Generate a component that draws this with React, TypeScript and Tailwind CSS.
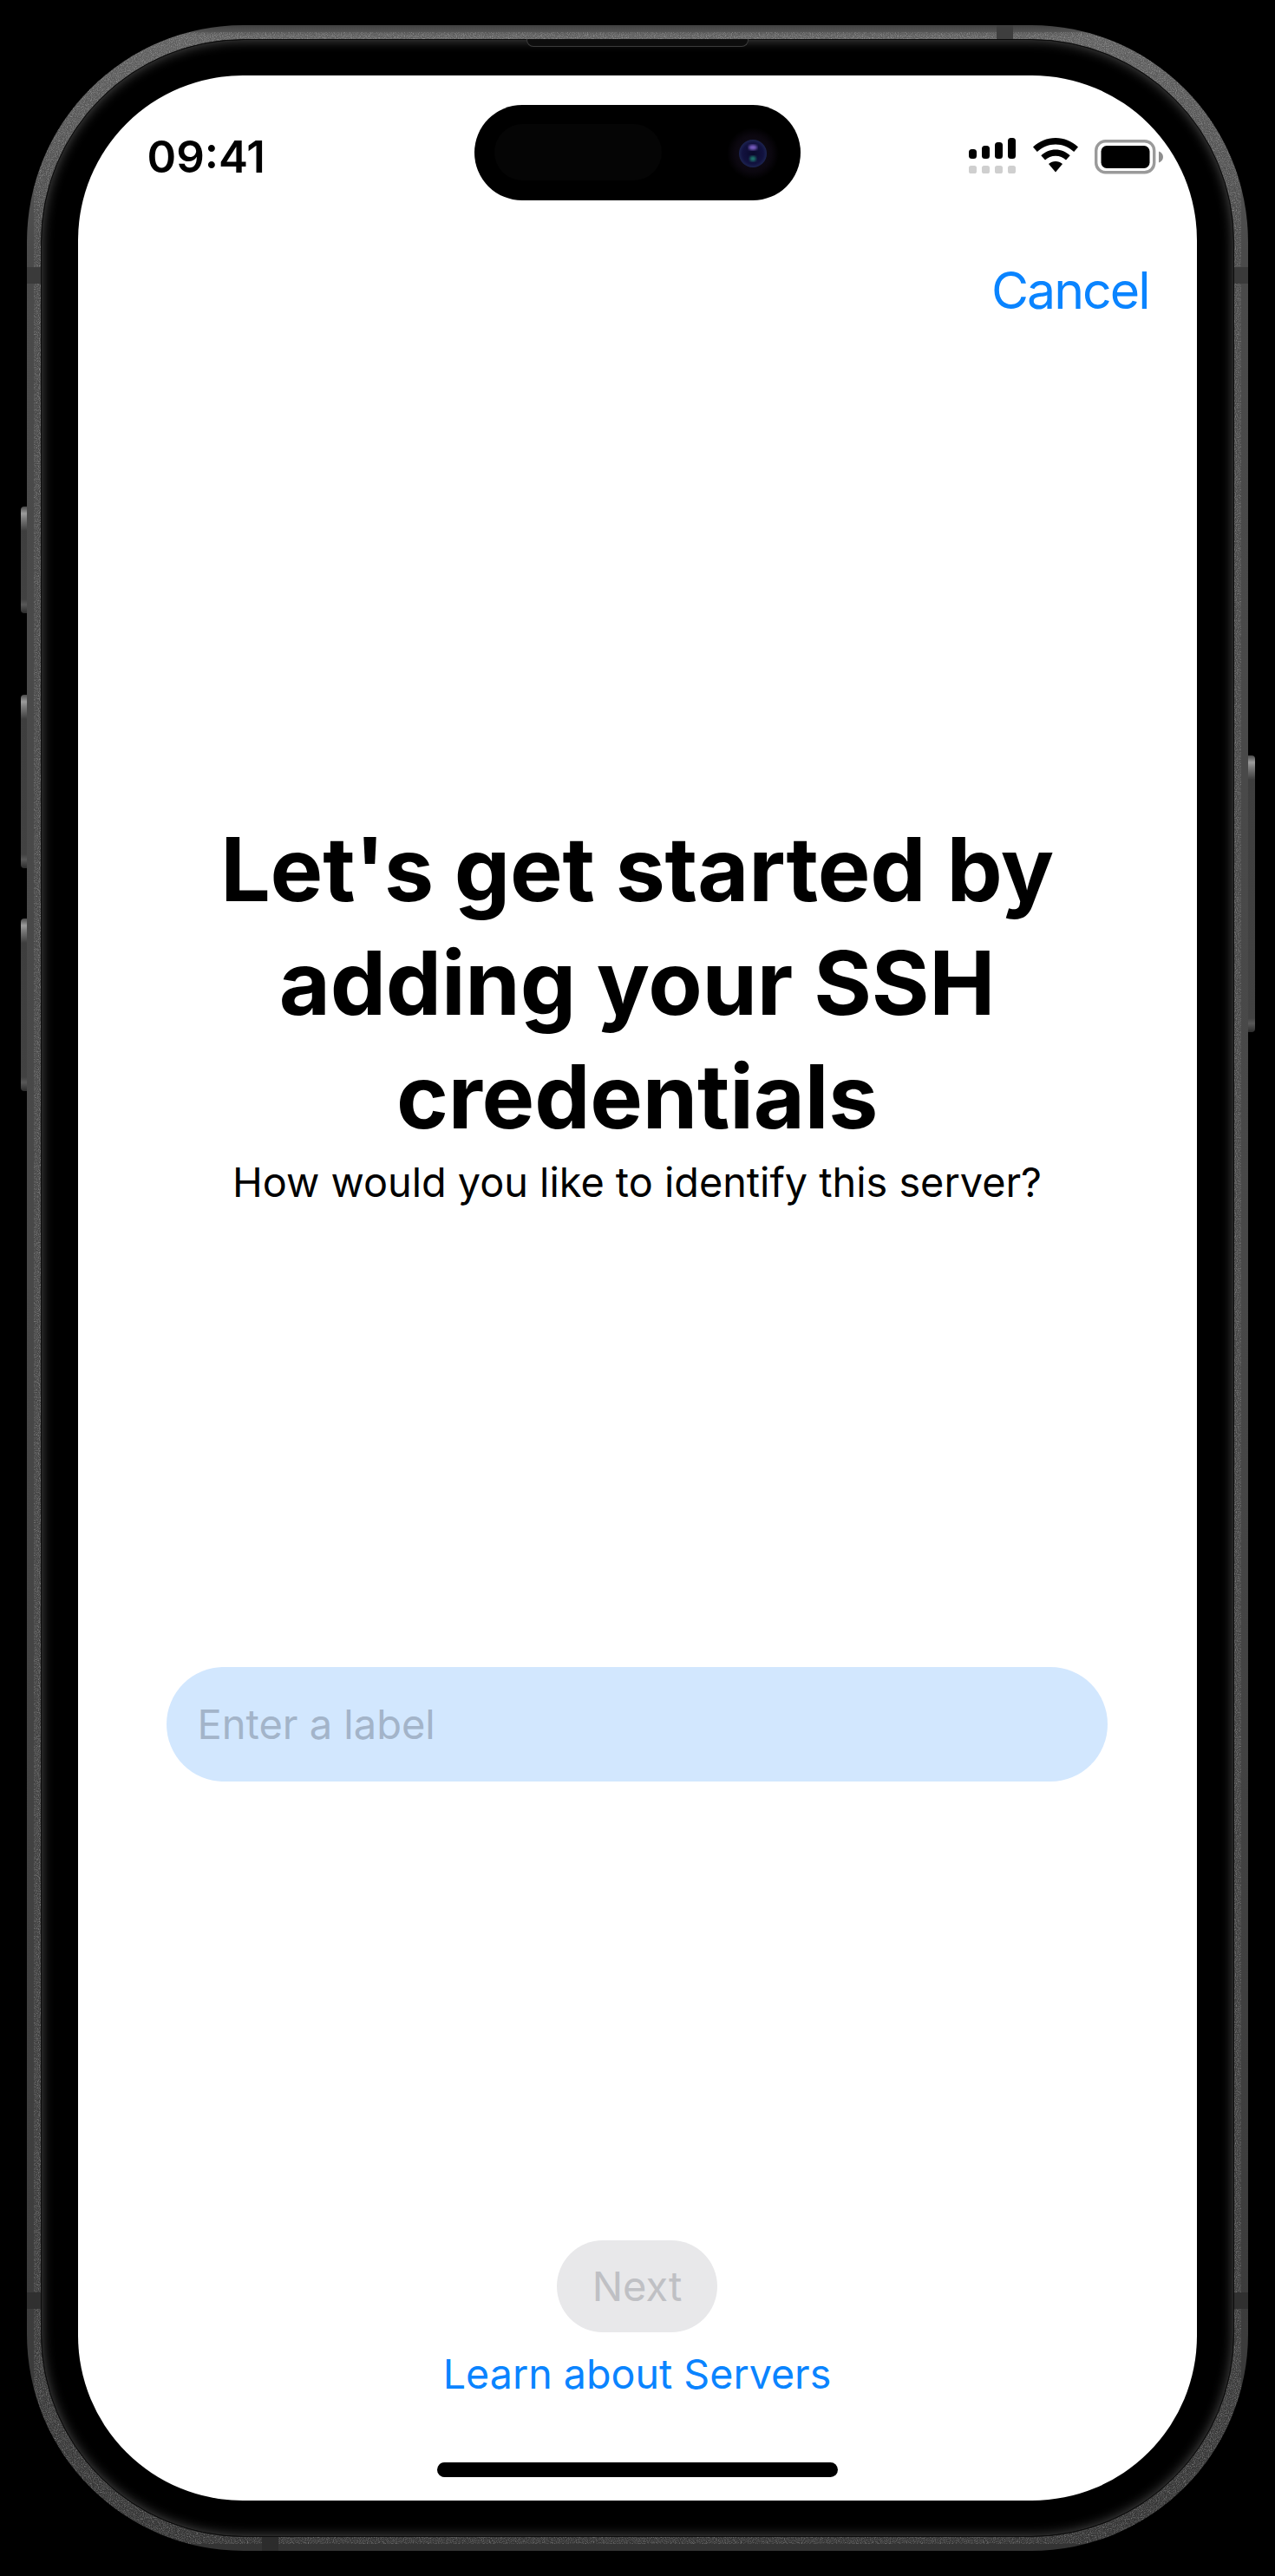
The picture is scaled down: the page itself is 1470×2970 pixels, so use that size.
import React from "react";

const font = { fontFamily: "Inter, 'Noto Sans', sans-serif" };

function Signal() {
  const bars = [
    { x: 0, y: 13, h: 11 },
    { x: 15, y: 9, h: 15 },
    { x: 30, y: 5, h: 19 },
    { x: 45, y: 0, h: 24 },
  ];
  return (
    <svg width="54" height="41" viewBox="0 0 54 41">
      {bars.map((b) => (
        <rect key={b.x} x={b.x} y={b.y} width="9" height={b.h} rx="3.5" fill="#000" />
      ))}
      {bars.map((b) => (
        <rect key={b.x} x={b.x} y="32" width="9" height="9" rx="2.6" fill="#cfcfcf" />
      ))}
    </svg>
  );
}

function Wifi() {
  return (
    <svg width="52" height="40" viewBox="0 0 52 40">
      <path d="M26 0C16 0 7.500 3.800 0 10.500L4.800 16C10.500 10.800 17.800 7.400 26 7.400C34.200 7.400 41.500 10.800 47.200 16L52 10.500C44.500 3.800 36 0 26 0Z" fill="#000" />
      <path d="M26 13.500C19.500 13.500 14 16 9.300 20.200L14 25.500C17.300 22.500 21.300 20.700 26 20.700C30.700 20.700 34.700 22.500 38 25.500L42.700 20.200C38 16 32.500 13.500 26 13.500Z" fill="#000" />
      <path d="M26 27C23 27 20.300 28 18 30L26 39.500L34 30C31.700 28 29 27 26 27Z" fill="#000" />
    </svg>
  );
}

function Battery() {
  return (
    <svg width="80" height="40" viewBox="0 0 80 40">
      <rect x="1.700" y="1.700" width="67" height="36" rx="11" fill="none" stroke="#9a9a9a" strokeWidth="3.400" />
      <rect x="7.500" y="7" width="56" height="26" rx="6.500" fill="#000" />
      <path d="M74 13.500C77 14.500 79 17 79 20C79 23 77 25.500 74 26.500Z" fill="#8e8e8e" />
    </svg>
  );
}

function Lens() {
  return (
    <svg width="62" height="62" viewBox="0 0 62 62" className="absolute right-[24px] top-[25px]">
      <defs>
        <radialGradient id="halo">
          <stop offset="0%" stopColor="#140f1e" />
          <stop offset="70%" stopColor="#0b070f" />
          <stop offset="100%" stopColor="#000" />
        </radialGradient>
        <radialGradient id="glass">
          <stop offset="0%" stopColor="#0a0a2c" />
          <stop offset="75%" stopColor="#12123f" />
          <stop offset="100%" stopColor="#1c2450" />
        </radialGradient>
        <filter id="soft">
          <feGaussianBlur stdDeviation="1.400" />
        </filter>
      </defs>
      <circle cx="31" cy="31" r="30" fill="url(#halo)" />
      <circle cx="31" cy="31" r="16" fill="url(#glass)" />
      <ellipse cx="31" cy="24" rx="5" ry="3" fill="#7a5fc4" filter="url(#soft)" />
      <ellipse cx="31" cy="37" rx="3.500" ry="3" fill="#1f7a70" filter="url(#soft)" />
    </svg>
  );
}

function RailTexture() {
  return (
    <svg className="absolute inset-0 pointer-events-none" width="1408" height="2912" viewBox="0 0 1408 2912">
      <defs>
        <filter id="grain" x="0" y="0" width="100%" height="100%">
          <feTurbulence type="fractalNoise" baseFrequency="0.9" numOctaves="2" seed="4" />
          <feColorMatrix values="0 0 0 0 1  0 0 0 0 1  0 0 0 0 1  0.700 0 0 0 -0.290" />
          <feComposite in2="SourceAlpha" operator="in" />
        </filter>
      </defs>
      <rect x="8" y="8" width="1392" height="2896" rx="242" fill="none" stroke="#fff" strokeWidth="16" filter="url(#grain)" />
    </svg>
  );
}

function SideButton({ className }: { className: string }) {
  return (
    <div
      className={`absolute w-[9px] bg-[linear-gradient(to_bottom,#4a4a4a_0px,#9c9c9c_8px,#7a7a7a_14px,#3e3e3e_28px,#424242_calc(100%-16px),#585858_calc(100%-10px),#2c2c2c_100%)] ${className}`}
    />
  );
}

export default function App() {
  return (
    <div style={font} className="w-[1470px] h-[2970px] bg-black flex items-start justify-start pl-[31px] pt-[29px] overflow-hidden">
      <div className="relative w-[1408px] h-[2912px] shrink-0">
        {/* side buttons */}
        <SideButton className="left-[-7px] top-[555px] h-[123px] rounded-l-[4px]" />
        <SideButton className="left-[-7px] top-[772px] h-[200px] rounded-l-[4px]" />
        <SideButton className="left-[-7px] top-[1030px] h-[199px] rounded-l-[4px]" />
        <SideButton className="right-[-8px] top-[842px] h-[319px] rounded-r-[4px]" />

        {/* rail */}
        <div className="relative w-full h-full rounded-[250px] p-[16px] bg-[linear-gradient(to_bottom,#404040_0px,#606060_12px,#4a4a4a_260px,#484848_50%,#3c3c3c_92%,#343434_100%)]">
          <RailTexture />
          {/* inner black */}
          <div className="relative w-full h-full rounded-[234px] bg-black border-[1.500px] border-[#0c0c0c] pt-[40.500px] pl-[41.500px] shadow-[inset_0_0_14px_rgba(255,255,255,0.32)]">
            {/* screen */}
            <div className="relative w-[1290px] h-[2796px] rounded-[190px] bg-white flex flex-col overflow-hidden">
              {/* island */}
              <div className="absolute left-[457px] top-[34px] w-[376px] h-[110px] rounded-full bg-black">
                <div className="absolute left-[23px] top-[22px] w-[193px] h-[65px] rounded-full bg-[#050505]" />
                <Lens />
              </div>

              {/* status */}
              <div className="flex items-start justify-between h-[114px] pl-[80px] pr-[38px] pt-[72px]">
                <span className="text-[51px] leading-[50px] font-semibold text-black -mt-[3px]">09:41</span>
                <div className="flex items-start">
                  <Signal />
                  <div className="ml-[20px]">
                    <Wifi />
                  </div>
                  <div className="ml-[19px] mt-[2px]">
                    <Battery />
                  </div>
                </div>
              </div>

              {/* cancel */}
              <div className="flex justify-end pr-[55px] mt-[98px]">
                <span className="text-[59px] leading-[72px] text-[#0a84ff] tracking-[-2px]">Cancel</span>
              </div>

              {/* heading */}
              <h1 className="mt-[566px] text-center text-[102px] leading-[131px] font-bold text-black tracking-[-0.200px]">
                Let's get started by
                <br />
                adding your SSH
                <br />
                credentials
              </h1>
              <p className="mt-[3px] text-center text-[46.800px] leading-[60px] text-black">
                How would you like to identify this server?
              </p>

              {/* input */}
              <div className="mt-[529px] ml-[102px] mr-[103px] h-[132px] rounded-full bg-[#d2e7fe] flex items-center pl-[36px] pt-[2px]">
                <span className="text-[47px] text-[#a3b4c9]">Enter a label</span>
              </div>

              {/* footer */}
              <div className="mt-[529px] flex justify-center">
                <div className="w-[185px] h-[106px] rounded-full bg-[#e8e8ea] flex items-center justify-center pt-[2px]">
                  <span className="text-[47px] text-[#bfc0c4]">Next</span>
                </div>
              </div>
              <p className="mt-[18px] text-center text-[46.600px] leading-[60px] text-[#0a84ff]">Learn about Servers</p>
              <div className="mt-[72px] mx-auto w-[462px] h-[17px] rounded-full bg-black" />
            </div>
          </div>

          {/* antenna bands */}
          <div className="absolute left-0 top-[279px] w-[16px] h-[19px] bg-[#3a3a3a]" />
          <div className="absolute right-0 top-[279px] w-[16px] h-[19px] bg-[#3a3a3a]" />
          <div className="absolute left-0 top-[2614px] w-[16px] h-[19px] bg-[#303030]" />
          <div className="absolute right-0 top-[2614px] w-[16px] h-[19px] bg-[#303030]" />
          <div className="absolute left-[1118px] top-0 w-[19px] h-[16px] bg-[#3e3e3e]" />
          <div className="absolute left-[271px] bottom-0 w-[19px] h-[16px] bg-[#2c2c2c]" />

          {/* speaker */}
          <div className="absolute left-[576px] top-[16px] w-[256px] h-[9px] rounded-b-[8px] bg-[#0d0d0d] border-b border-x border-[#3c3c3c]" />
        </div>
      </div>
    </div>
  );
}
